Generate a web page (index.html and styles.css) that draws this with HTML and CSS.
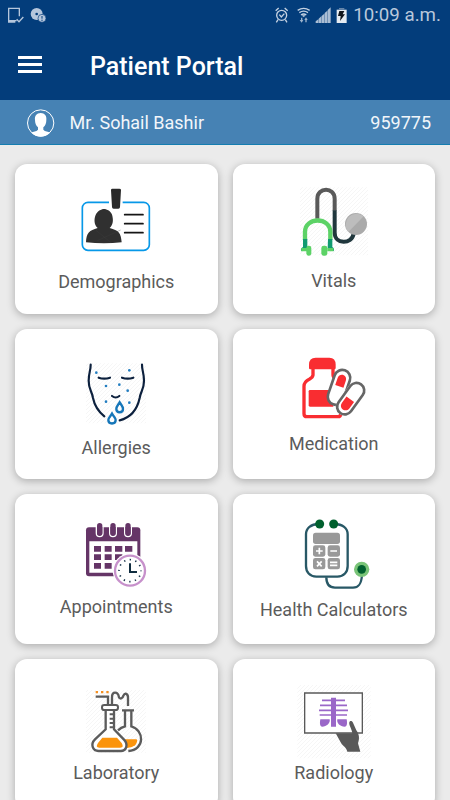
FILE: index.html
```html
<!DOCTYPE html>
<html lang="en">
<head>
<meta charset="utf-8">
<title>Patient Portal</title>
<link rel="stylesheet" href="styles.css">
</head>
<body>
<header class="top">
  <div class="status">
    <svg class="status-left" viewBox="0 0 150 90" fill="none">
      <path d="M58 49V25H26v41h20M26 62h24" stroke="#b5c6dc" stroke-width="4"/>
      <path d="M50 58l7 7 13-14" stroke="#b5c6dc" stroke-width="4"/>
      <circle cx="110" cy="42" r="18" fill="#b5c6dc"/>
      <circle cx="110" cy="42" r="4" fill="#033d7b"/>
      <circle cx="126" cy="55" r="12" fill="#b5c6dc" stroke="#033d7b" stroke-width="2"/>
      <path d="M126 48v8M126 59v4" stroke="#033d7b" stroke-width="3"/>
    </svg>
    <svg class="status-right" viewBox="145 0 225 90" fill="none">
      <g stroke="#c5d2e2" stroke-width="4">
        <circle cx="171" cy="46" r="15"/>
        <path d="M164 44l6 7 9-10M153 32l9-8M189 32l-9-8M160 59l-5 8M182 59l5 8"/>
        <path d="M219 31q18-12 36 0M224 38q13-9 26 0M229 45q8-6 16 0"/>
      </g>
      <path d="M232 47l5-5 5 5-5 5zM225 60h4v-7h4v7h3l-5 8zM239 60l5-8 5 8h-3v7h-4v-7z" fill="#9eb4cd"/>
      <path d="M273 69v-5l8-6v11zM282 69V56l8-7v20zM291 69V48l8-7v28zM300 69V39l8-7v37zM309 69V30l9-8v47z" fill="#a9bdd4"/>
      <path d="M336 29h30v40h-30z" fill="#e5ebf1"/>
      <path d="M343 24h16v5h-16z" fill="#6686aa"/>
      <path d="M344 33h15l-5 10h7l-15 20 2-15h-8z" fill="#10151b"/>
    </svg>
    <time class="clock">10:09 a.m.</time>
  </div>
  <div class="bar">
    <div class="menu"><i></i><i></i><i></i></div>
    <h1>Patient Portal</h1>
  </div>
</header>
<section class="patient">
  <svg class="avatar" viewBox="78 321 87 87">
    <circle cx="122" cy="366" r="39.5" fill="none" stroke="#fff" stroke-width="3"/>
    <path d="M122 336c-12 0-19 9-17 21 0 9 3 17 9 22v7c-5 6-15 5-20 9q12 12 28 12t28-12c-5-4-15-3-20-9v-7c6-5 9-13 9-22 2-12-5-21-17-21z" fill="#fff"/>
  </svg>
  <span class="name">Mr. Sohail Bashir</span>
  <span class="id">959775</span>
</section>
<main class="grid">
  <article class="card demographics">
    <svg viewBox="0 0 270 240" fill="none">
      <rect x="37" y="67" width="201" height="144" rx="17" stroke="#0798e8" stroke-width="5"/>
      <path d="M117 58h41v28q0 4-4 4h-33q-4 0-4-4z" fill="#fff"/>
      <path d="M123 30q0-4 4-4h21q5 0 5 4l-3 51q0 5-5 5h-14q-5 0-5-5z" fill="#292929"/>
      <path d="M48 187c1-28 10-36 35-43-11-10-11-26-7-37 5-14 18-20 26-20s22 6 25 20c3 13 3 27-8 37 27 7 34 15 36 43q-53 6-107 0z" fill="#303030"/>
      <path d="M82 182l70-32M77 150l46 38" stroke="#414141" stroke-width="1"/>
      <path d="M164 104h55M164 131h55M164 158h55" stroke="#151515" stroke-width="5" stroke-linecap="round"/>
    </svg>
    <h2>Demographics</h2>
  </article>
  <article class="card vitals">
    <svg viewBox="0 0 270 240" fill="none">
      <defs><pattern id="grain" width="12" height="12" patternUnits="userSpaceOnUse"><path d="M0 12L12 0" stroke="#f1f1f1" stroke-width="2"/></pattern></defs>
      <path d="M30 22h204v204H30z" fill="url(#grain)"/>
      <path d="M82 116V56c0-36 52-36 52 0v36" stroke="#595959" stroke-width="12"/>
      <path d="M134 91v67c0 36 52 36 57 3" stroke="#20373d" stroke-width="12"/>
      <circle cx="198" cy="132" r="33" fill="#aaa"/>
      <path d="M175 156A33 33 0 0 1 221 109z" fill="#bdbdbd"/>
      <path d="M45 180v-24c0-46 76-46 76 0v24" stroke="#5cd266" stroke-width="13"/>
      <path d="M39 177h13v28l-18 9q-3-9 5-13zM114 177h13v24q7 4 4 13l-18-9z" fill="#109a70"/>
      <path d="M34 204h18v10H34zM112 204h18v10h-18z" fill="#5cd266"/>
      <rect x="49" y="197" width="15" height="30" rx="7" fill="#5cd266"/>
      <rect x="94" y="197" width="18" height="30" rx="7" fill="#5cd266"/>
    </svg>
    <h2>Vitals</h2>
  </article>
  <article class="card allergies">
    <svg viewBox="0 0 270 240" fill="none">
      <path d="M48 40h180v180H48z" fill="url(#grain)"/>
      <g stroke="#0c203d" stroke-width="6.5" stroke-linecap="round">
        <path d="M62 44c0 20-6 24-6 48 0 27 10 31 13 52 5 25 18 42 34 55M216 44c0 20 6 24 6 48 0 27-10 31-13 52-8 37-28 59-60 67"/>
        <path d="M86 83q17 6 34 0M156 83q17 6 34 0M126 138q11 9 22 0"/>
      </g>
      <path d="M149 157c-5 9-10 12-10 20 0 13 20 13 20 0 0-8-5-11-10-20zM126 191c-5 9-11 12-11 19 0 14 22 14 22 0 0-7-6-10-11-19z" stroke="#1576b9" stroke-width="7"/>
      <g fill="#227dc0"><circle cx="79" cy="68" r="4"/><circle cx="178" cy="61" r="4"/><circle cx="108" cy="108" r="4"/><circle cx="148" cy="104" r="4"/><circle cx="173" cy="122" r="4"/><circle cx="108" cy="155" r="4"/><circle cx="178" cy="158" r="4"/></g>
    </svg>
    <h2>Allergies</h2>
  </article>
  <article class="card medication">
    <svg viewBox="0 0 270 240" fill="none">
      <path d="M69 52v23q-1 7-10 12-17 8-17 22v82q0 9 9 9h93q8 0 8-9v-82q0-14-14-22-9-5-9-12V52z" fill="#fff" stroke="#f92d31" stroke-width="10"/>
      <path d="M57 44q0-21 20-21h41q19 0 19 21v10q0 4-4 4H61q-4 0-4-4z" fill="#f92d31"/>
      <path d="M60 120h70v50H60q-4 0-4-4v-42q0-4 4-4z" fill="#f92d31"/>
      <g transform="translate(147 112) rotate(19)"><rect x="-24" y="-54" width="48" height="108" rx="24" fill="#fff" stroke="#666" stroke-width="8"/><path d="M-13-3v-22c0-19 26-19 26 0v22z" fill="#f92d31"/></g>
      <g transform="translate(182 146) rotate(36)"><rect x="-27" y="-57" width="54" height="114" rx="27" fill="#fff"/><rect x="-23" y="-53" width="46" height="106" rx="23" fill="#fff" stroke="#666" stroke-width="8"/><path d="M-14 2h28v23c0 20-28 20-28 0z" fill="#f92d31"/></g>
    </svg>
    <h2>Medication</h2>
  </article>
  <article class="card appointments">
    <svg viewBox="0 0 270 240" fill="none">
      <rect x="48" y="37" width="163" height="147" rx="9" fill="#653567"/>
      <path d="M58 79h144v94H58z" fill="#fff"/>
      <g fill="#653567" stroke="#fff" stroke-width="4"><rect x="79" y="22" width="20" height="43" rx="10"/><rect x="119" y="22" width="20" height="43" rx="10"/><rect x="164" y="22" width="20" height="43" rx="10"/></g>
      <path d="M77 20h24v16H77zM117 20h24v16h-24zM162 20h24v16h-24z" fill="#fff"/>
      <g fill="#653567"><rect x="81" y="24" width="16" height="37" rx="8"/><rect x="121" y="24" width="16" height="37" rx="8"/><rect x="166" y="24" width="16" height="37" rx="8"/></g>
      <path d="M72 93h21v17H72zM104 93h21v17h-21zM135 93h22v17h-22zM165 93h22v17h-22zM72 118h21v17H72zM104 118h21v17h-21zM135 118h22v17h-22zM72 144h21v17H72zM104 144h21v17h-21z" fill="#653567"/>
      <circle cx="180" cy="167" r="52" fill="#fff"/>
      <circle cx="180" cy="167" r="45" fill="#fff" stroke="#c791cb" stroke-width="7"/>
      <circle cx="180" cy="167" r="33" stroke="#17324a" stroke-width="5" stroke-dasharray="4 13.28" stroke-dashoffset="2"/>
      <path d="M180 145v26h21" stroke="#102d40" stroke-width="6"/>
    </svg>
    <h2>Appointments</h2>
  </article>
  <article class="card calculators">
    <svg viewBox="0 0 270 240" fill="none">
      <path d="M86 27c-23 0-38 13-38 31v95c0 18 11 32 31 32h63c20 0 31-14 31-32V58c0-18-15-31-40-31" stroke="#285866" stroke-width="7"/>
      <path d="M109 187c0 20 9 31 26 31h54c17 0 25-10 27-38" stroke="#285866" stroke-width="7"/>
      <circle cx="89" cy="27" r="13.5" fill="#00602e"/><circle cx="131" cy="27" r="13.5" fill="#00602e"/>
      <circle cx="215" cy="163" r="23" fill="#79c477"/><circle cx="215" cy="163" r="13" fill="#00602e"/>
      <g fill="#999"><rect x="69" y="53" width="81" height="34" rx="8"/><rect x="69" y="91" width="37" height="34" rx="7"/><rect x="113" y="91" width="37" height="34" rx="7"/><rect x="69" y="129" width="37" height="34" rx="7"/><rect x="113" y="129" width="37" height="34" rx="7"/></g>
      <path d="M78 108h20M88 98v20M121 108h20M81 139l14 15M95 139l-14 15M120 142h22M120 151h22" stroke="#fff" stroke-width="5"/>
    </svg>
    <h2>Health Calculators</h2>
  </article>
  <article class="card laboratory">
    <svg viewBox="0 0 270 240" fill="none">
      <path d="M48 30h180v188H48z" fill="url(#grain)"/>
      <path d="M142 178h57c5 0 2 12-4 18q-9 8-24 8h-18z" fill="#fb940c"/>
      <g stroke="#5b5b5b" stroke-width="7">
        <path d="M156 91h36M165 91v48q-12 3-21 12M184 91v48c39 11 42 70-9 74"/>
        <path d="M77 50h37v23M126 75V52c0-19 18-19 21 0 5 8 12 0 13-5 5-10 14-6 14 6v25"/>
      </g>
      <path d="M107 87v61l-32 30c-14 14-8 35 11 35h66c18 0 23-20 10-34l-30-31V87z" fill="#fff" stroke="#5b5b5b" stroke-width="7"/>
      <path d="M97 173h44l14 16q8 14-4 14H88q-13 0-4-14z" fill="#fb940c"/>
      <rect x="96" y="75" width="48" height="15" rx="7" fill="#fff" stroke="#5b5b5b" stroke-width="6"/>
      <path d="M119 103h10M119 116h10M119 129h10M119 142h10" stroke="#5b5b5b" stroke-width="6"/>
      <path d="M77 33h7v7h-7zM93 33h7v7h-7zM109 33h7v7h-7z" fill="#f69020"/>
    </svg>
    <h2>Laboratory</h2>
  </article>
  <article class="card radiology">
    <svg viewBox="0 0 270 240" fill="none">
      <path d="M22 15h220v220H22z" fill="url(#grain)"/>
      <path d="M44 39h173v120H44z" fill="#fff" stroke="#595959" stroke-width="4"/>
      <path d="M96 61h69M90 76h81M87 91h87M89 105h82" stroke="#9a67c8" stroke-width="5"/>
      <path d="M123 53h15v87h-15zM91 118h28c3 12-10 22-22 22-8 0-8-11-6-22zM142 118h28c2 11 2 22-6 22-13 0-25-10-22-22z" fill="#9a67c8"/>
      <path d="M137 160h50c-1-13-11-24-9-33 2-6 9-4 11 1l10 23c9 13 10 24 5 39l7 25h-39c-5-17-15-16-20-28z" fill="#595959"/>
    </svg>
    <h2>Radiology</h2>
  </article>
</main>
</body>
</html>
```
FILE: styles.css
```css
* { box-sizing: border-box; }
body {
  margin: 0;
  height: 800px;
  overflow: hidden;
  background: #ebebeb;
  font-family: Roboto, "Liberation Sans", sans-serif;
}
h1, h2 { margin: 0; }
svg { display: block; flex: none; }
.top { height: 100px; background: #033d7b; color: #fff; }
.status { height: 30px; display: flex; }
.status-left { width: 50px; height: 30px; margin-right: 223.3px; }
.status-right { width: 75px; height: 30px; }
.clock {
  margin-left: 5px;
  font-size: 18.7px;
  line-height: 31px;
  white-space: nowrap;
  color: #b9c8db;
}
.bar { display: flex; align-items: center; height: 70px; padding-left: 18px; }
.menu { display: grid; gap: 4px; width: 24px; margin-right: 48px; padding-bottom: 1px; }
.menu i { height: 3px; background: #fff; }
.bar h1 { font-size: 25px; font-weight: 500; line-height: 30px; padding-top: 4px; }
.patient {
  display: flex;
  align-items: center;
  height: 45px;
  padding: 1px 19px 0 26px;
  background: #4682b4;
  border-bottom: 1px solid #147db0;
  color: #f2f6fa;
  font-size: 18px;
}
.avatar { width: 29px; height: 29px; margin-right: 14.5px; }
.id { margin-left: auto; }
.grid {
  display: grid;
  grid-template-columns: 1fr 1fr;
  grid-auto-rows: 150px;
  gap: 15px;
  padding: 19px 15px 0;
}
.card {
  display: flex;
  flex-direction: column;
  align-items: center;
  padding-top: 21px;
  border-radius: 12px;
  background: #fff;
  box-shadow: 0 2px 8px rgba(0, 0, 0, .28);
}
.card svg { width: 90px; height: 80px; margin-right: 2.5px; }
.card:nth-child(even) svg { margin: 0 0 0 2.5px; }
.card h2 {
  font-size: 18px;
  font-weight: 400;
  line-height: 22px;
  color: #5b5b5b;
  white-space: nowrap;
}
.demographics, .vitals { padding-top: 16px; }
.demographics h2 { margin-top: 10.5px; }
.vitals h2 { margin-top: 9.5px; }
.allergies h2 { margin-top: 7px; }
.medication h2 { margin-top: 3px; }
.appointments h2 { margin-top: 1px; }
.calculators h2 { margin-top: 4px; }
.laboratory h2, .radiology h2 { margin-top: 1.5px; }
```
